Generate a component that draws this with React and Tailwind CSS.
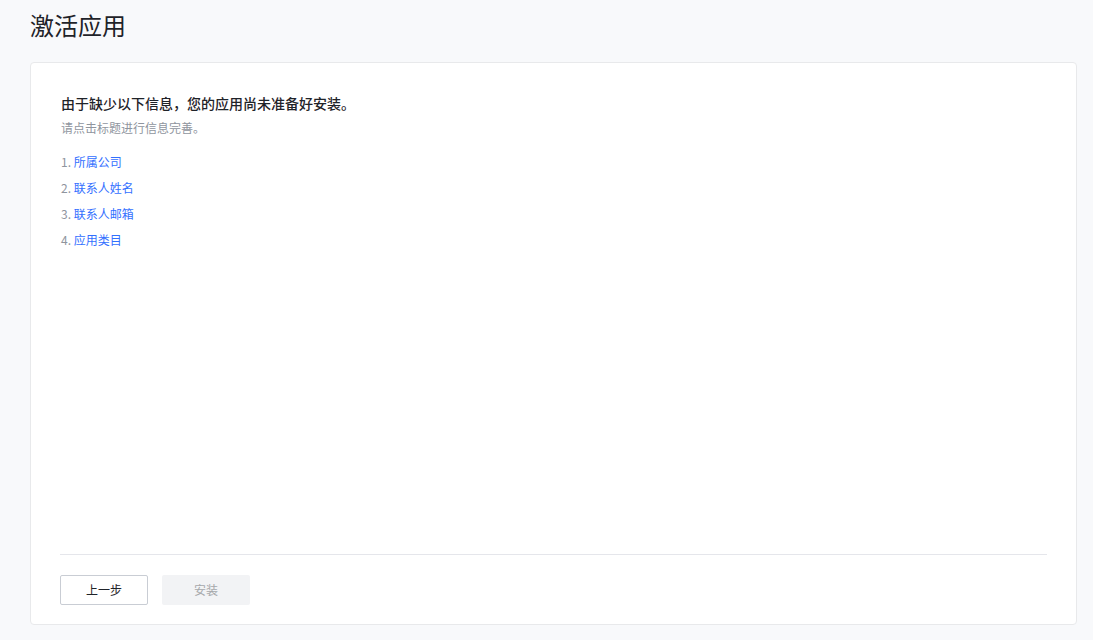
export default function App() {
  const items = ["所属公司", "联系人姓名", "联系人邮箱", "应用类目"];
  return (
    <div
      className="w-[1093px] h-[640px] bg-[#f8f9fb] flex flex-col pl-[30px] pr-[16px] pb-[15px] overflow-hidden"
      style={{ fontFamily: '"Noto Sans CJK SC", "Noto Sans", sans-serif' }}
    >
      <h1 className="pt-[9px] text-[24px] leading-[32px] text-[#1f2329] font-normal">激活应用</h1>
      <div className="mt-[21px] flex-1 bg-white border border-[#e8e9eb] rounded-[4px] flex flex-col px-[29px]">
        <div className="flex-1 pt-[30px] pl-[1px]">
          <div className="text-[14px] leading-[20px] font-medium text-[#1f2329]">
            由于缺少以下信息，您的应用尚未准备好安装。
          </div>
          <div className="mt-[6px] text-[12px] leading-[18px] text-[#8f959e]">请点击标题进行信息完善。</div>
          <ol className="mt-[16px] flex flex-col gap-[8px]">
            {items.map((t, i) => (
              <li key={t} className="text-[12px] leading-[18px]">
                <span className="text-[#8f959e]">{i + 1}. </span>
                <span className="text-[#3370ff] cursor-pointer">{t}</span>
              </li>
            ))}
          </ol>
        </div>
        <div className="border-t border-[#e5e6eb] pt-[20px] pb-[19px] flex gap-[14px]">
          <button className="w-[88px] h-[30px] border border-[#c9cdd4] rounded-[2px] bg-white text-[12px] text-[#1f2329]">
            上一步
          </button>
          <button className="w-[88px] h-[30px] rounded-[2px] bg-[#f2f3f5] text-[12px] text-[#a6a8ab]">
            安装
          </button>
        </div>
      </div>
    </div>
  );
}
